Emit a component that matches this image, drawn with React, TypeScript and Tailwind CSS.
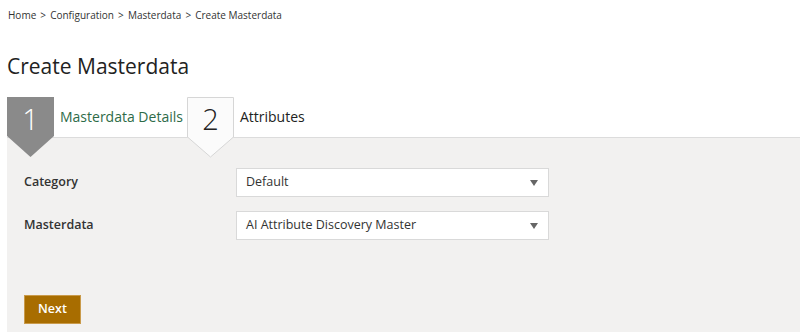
import React from "react";

const font = { fontFamily: '"Open Sans", "Noto Sans", Arial, sans-serif' };

function Badge({ n, active }: { n: string; active: boolean }) {
  return (
    <div className="relative w-[47px] h-[40px] shrink-0 z-10">
      <svg
        className="absolute left-0 top-0"
        width="47"
        height="61"
        viewBox="0 0 47 61"
      >
        <polygon
          points={active ? "0,0 47,0 47,39 23.5,60 0,39" : "0.5,0.5 46.5,0.5 46.5,40 23.5,60 0.5,40"}
          fill={active ? "#8a8a8a" : "#fbfbfb"}
          stroke={active ? "none" : "#d6d6d6"}
          strokeWidth="1"
        />
      </svg>
      <span
        className={`absolute left-0 top-[2px] w-[47px] text-center text-[29px] leading-[40px] font-light ${
          active ? "text-white" : "text-[#222]"
        }`}
      >
        {n}
      </span>
    </div>
  );
}

function Select({ value }: { value: string }) {
  return (
    <div className="w-[313px] h-[29px] bg-white border border-[#d9d9d9] flex items-center justify-between pl-[9px] pr-[10px]">
      <span className="text-[12.5px] text-[#333]">{value}</span>
      <svg width="8" height="6" viewBox="0 0 8 6">
        <polygon points="0,0 8,0 4,6" fill="#666" />
      </svg>
    </div>
  );
}

export default function App() {
  return (
    <div className="w-[800px] h-[332px] bg-white overflow-hidden flex flex-col" style={font}>
      <div className="pl-[8px] pt-[8px] text-[10px] text-[#333] leading-[14px]">
        Home <span className="mx-[1.5px]">&gt;</span> Configuration{" "}
        <span className="mx-[1.5px]">&gt;</span> Masterdata{" "}
        <span className="mx-[1.5px]">&gt;</span> Create Masterdata
      </div>
      <h1 className="pl-[7px] mt-[31px] text-[21px] leading-[27px] text-[#222] font-normal">
        Create Masterdata
      </h1>
      <div className="pl-[7px] mt-[17px] flex items-center h-[40px]">
        <Badge n="1" active />
        <span className="ml-[6px] mr-[4px] text-[14px] text-[#2e6b48] -mt-[2px]">Masterdata Details</span>
        <Badge n="2" active={false} />
        <span className="ml-[6px] text-[14px] text-[#222] -mt-[2px]">Attributes</span>
      </div>
      <div className="ml-[7px] flex-1 bg-[#f2f1f0] border-t border-[#dcdcdc] pt-[30px] pl-[17px] flex flex-col">
        <div className="flex items-center">
          <div className="w-[212px] text-[12.5px] font-semibold text-[#333]">Category</div>
          <Select value="Default" />
        </div>
        <div className="flex items-center mt-[14px]">
          <div className="w-[212px] text-[12.5px] font-semibold text-[#333]">Masterdata</div>
          <Select value="AI Attribute Discovery Master" />
        </div>
        <button className="mt-[55px] w-[57px] h-[29px] bg-[#a86d00] border border-[#c99a4a] text-white text-[12.5px] font-semibold">
          Next
        </button>
      </div>
    </div>
  );
}
